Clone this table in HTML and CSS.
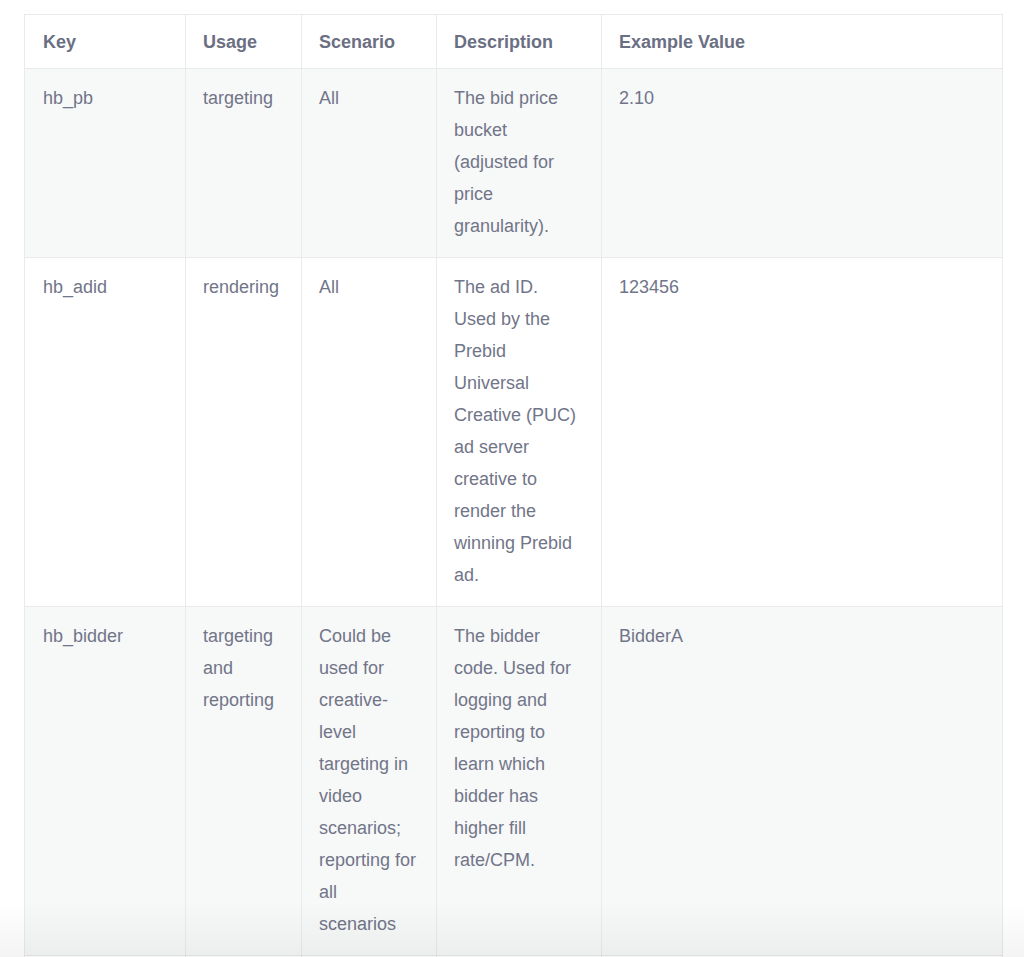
FILE: index.html
```html
<!DOCTYPE html>
<html lang="en">
<head>
<meta charset="utf-8">
<title>Prebid keys</title>
<link rel="stylesheet" href="styles.css">
</head>
<body>
<div class="wrap">
<table class="keys">
  <colgroup>
    <col class="c-key"><col class="c-usage"><col class="c-scen"><col class="c-desc"><col class="c-ex">
  </colgroup>
  <thead>
    <tr><th>Key</th><th>Usage</th><th>Scenario</th><th>Description</th><th>Example Value</th></tr>
  </thead>
  <tbody>
    <tr class="alt">
      <td>hb_pb</td><td>targeting</td><td>All</td>
      <td>The bid price bucket (adjusted for price granularity).</td><td>2.10</td>
    </tr>
    <tr>
      <td>hb_adid</td><td>rendering</td><td>All</td>
      <td>The ad ID. Used by the Prebid Universal Creative (PUC) ad server creative to render the winning Prebid ad.</td><td>123456</td>
    </tr>
    <tr class="alt">
      <td>hb_bidder</td><td>targeting and reporting</td>
      <td>Could be used for creative-level targeting in video scenarios; reporting for all scenarios</td>
      <td>The bidder code. Used for logging and reporting to learn which bidder has higher fill rate/CPM.</td><td>BidderA</td>
    </tr>
    <tr class="empty">
      <td></td><td></td><td></td><td></td><td></td>
    </tr>
  </tbody>
</table>
</div>
<div class="fade"></div>
</body>
</html>
```
FILE: styles.css
```css
html, body {
  margin: 0;
  padding: 0;
  background: #ffffff;
}
body {
  font-family: "Liberation Sans", Arial, Helvetica, sans-serif;
  font-size: 18px;
  color: #717589;
}
.wrap {
  padding: 14px 22px 0 24px;
}
.keys {
  width: 978px;
  border-collapse: collapse;
  table-layout: fixed;
  border: 1px solid #e8eaec;
}
.c-key { width: 161px; }
.c-usage { width: 116px; }
.c-scen { width: 135px; }
.c-desc { width: 165px; }
.c-ex { width: 401px; }
.keys th,
.keys td {
  border: 1px solid #e8eaec;
  text-align: left;
  vertical-align: top;
  line-height: 32px;
  padding: 13px 17px 15px 17px;
}
.keys th:first-child,
.keys td:first-child {
  padding-left: 18px;
}
.keys th {
  font-weight: bold;
  color: #6b6f83;
  padding-top: 11px;
  padding-bottom: 10px;
  background: #ffffff;
}
.keys tr.alt td {
  background: #f7f8f8;
}
.keys tr.empty td {
  height: 40px;
}
.fade {
  position: fixed;
  left: 0;
  right: 0;
  bottom: 0;
  height: 56px;
  background: linear-gradient(to bottom, rgba(0,0,0,0), rgba(0,0,0,0.045));
  pointer-events: none;
}
```
